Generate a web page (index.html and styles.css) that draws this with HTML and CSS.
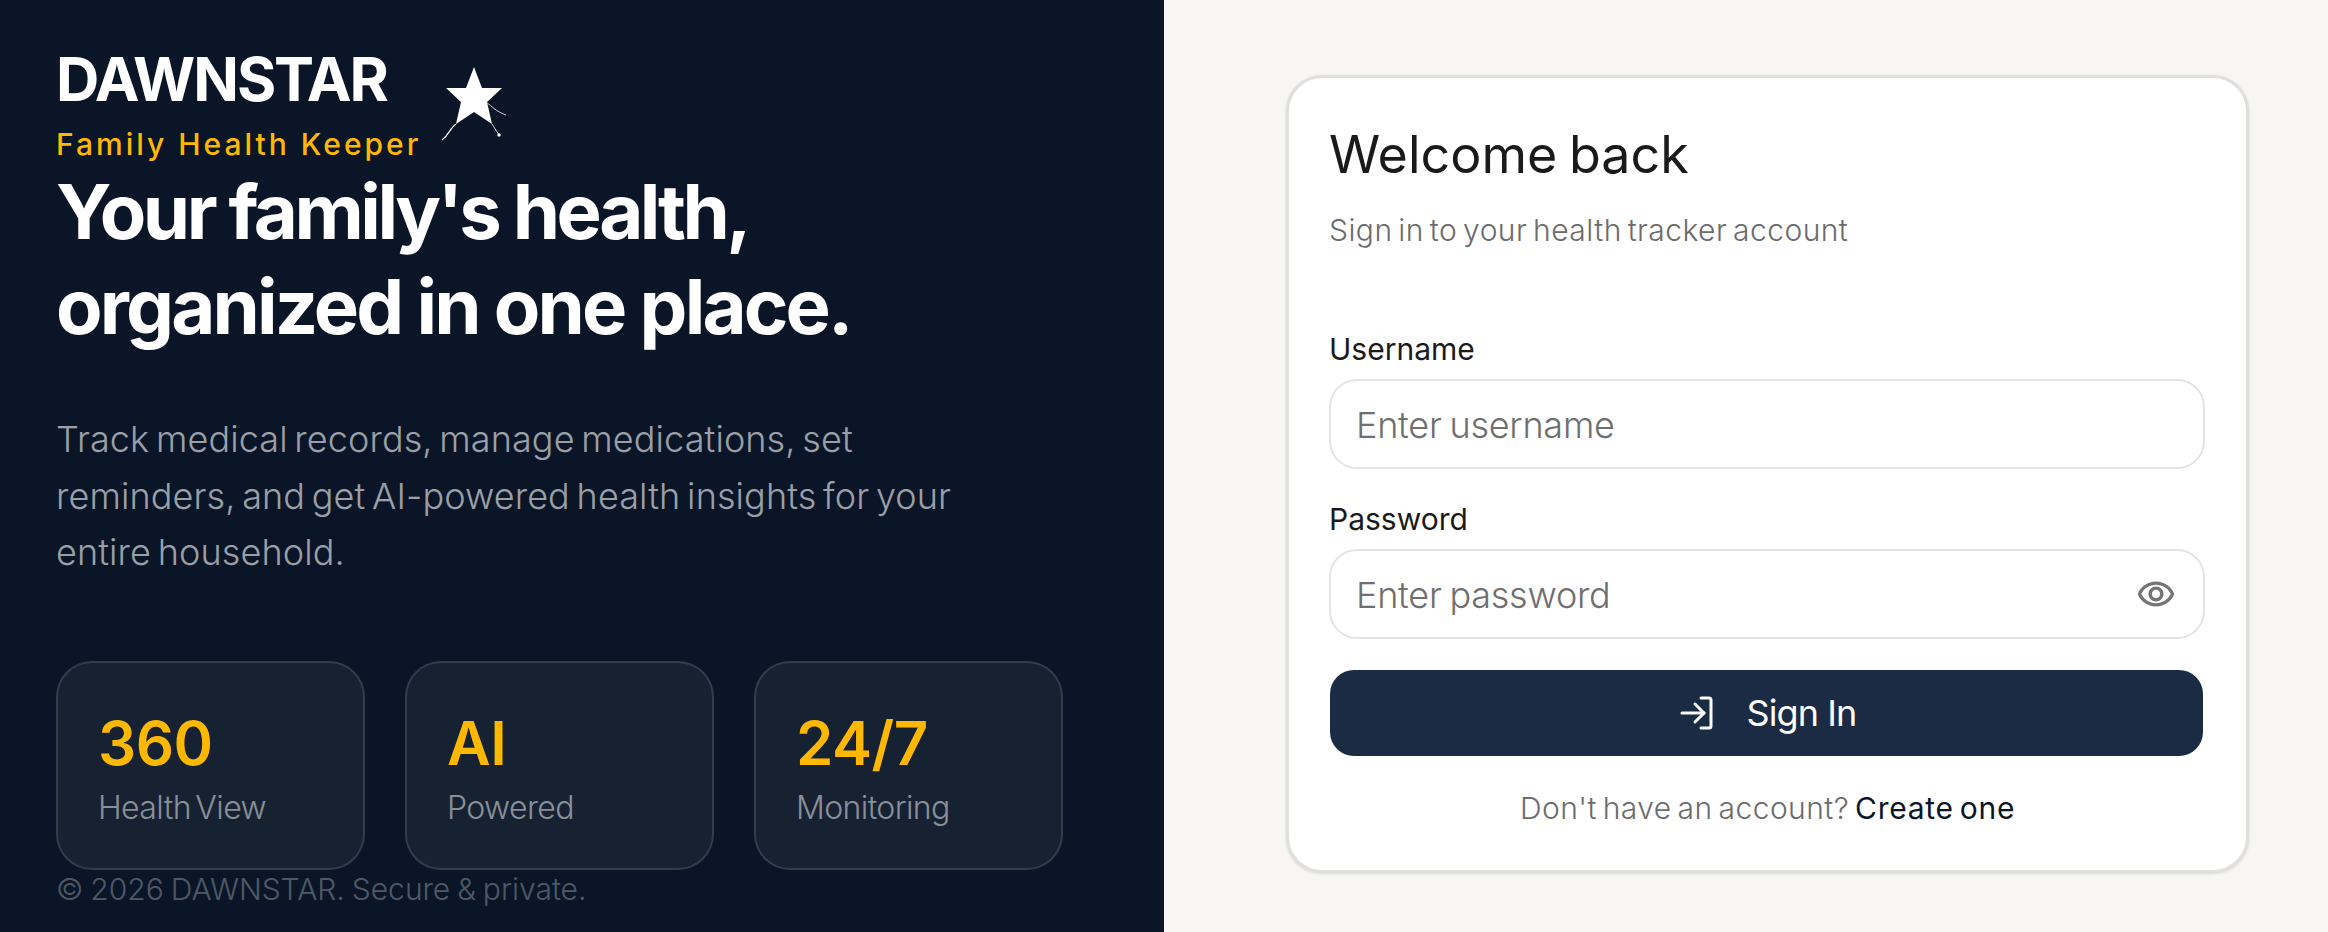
FILE: index.html
```html
<!DOCTYPE html>
<html lang="en">

<head>
    <meta charset="UTF-8">
    <meta name="viewport" content="width=device-width, initial-scale=1.0">
    <title>DAWNSTAR - Sign In</title>
    <link rel="stylesheet" href="styles.css">
</head>

<body>
    <div class="page">
        <div class="hero">
            <div class="brand">
                <div class="brand-text">
                    <div class="brand-name">DAWNSTAR</div>
                    <div class="brand-tag">Family Health Keeper</div>
                </div>
                <svg class="brand-star" viewBox="20 15 72 80" width="72" height="80">
                    <defs>
                        <filter id="soft" x="-20%" y="-20%" width="140%" height="140%">
                            <feGaussianBlur stdDeviation="0.6"></feGaussianBlur>
                        </filter>
                    </defs>
                    <polygon points="55,18 63,39 83,39 68,53 73,75 55,63 37,75 42,53 27,39 47,39" fill="#fff" filter="url(#soft)"></polygon>
                    <path d="M68 54 C73 57 76 62 87 66" fill="none" stroke="#fff" stroke-width="0.8"></path>
                    <path d="M73 75 L80 86" fill="none" stroke="#fff" stroke-width="0.8"></path>
                    <circle cx="80" cy="86" r="1.7" fill="#fff"></circle>
                    <path d="M37 75 C31 79 30 86 23 91" fill="none" stroke="#fff" stroke-width="1.3"></path>
                </svg>
            </div>
            <h1 class="headline">
                <span class="line-one">Your family's health,</span>
                <span class="line-two">organized in one place.</span>
            </h1>
            <p class="intro">Track medical records, manage medications, set reminders, and get AI-powered health insights for your entire household.</p>
            <div class="stats">
                <div class="stat">
                    <div class="stat-value">360</div>
                    <div class="stat-label">Health View</div>
                </div>
                <div class="stat">
                    <div class="stat-value">AI</div>
                    <div class="stat-label">Powered</div>
                </div>
                <div class="stat">
                    <div class="stat-value">24/7</div>
                    <div class="stat-label">Monitoring</div>
                </div>
            </div>
            <div class="copyright">© 2026 DAWNSTAR. Secure &amp; private.</div>
        </div>
        <div class="side">
            <div class="card">
                <h2 class="card-title">Welcome back</h2>
                <p class="card-sub">Sign in to your health tracker account</p>
                <label class="field-label" for="username">Username</label>
                <div class="input-box">
                    <input class="input" id="username" type="text" placeholder="Enter username">
                </div>
                <label class="field-label" for="password">Password</label>
                <div class="input-box">
                    <input class="input" id="password" type="password" placeholder="Enter password">
                    <svg class="eye" viewBox="0 0 24 24" width="40" height="40">
                        <path d="M12 6.5c3.79 0 7.17 2.13 8.82 5.5-1.65 3.37-5.02 5.5-8.82 5.5S4.83 15.37 3.18 12C4.83 8.63 8.21 6.5 12 6.5m0-2C7 4.5 2.73 7.61 1 12c1.73 4.39 6 7.5 11 7.5s9.27-3.11 11-7.5c-1.73-4.39-6-7.5-11-7.5zm0 5c1.38 0 2.5 1.12 2.5 2.5s-1.12 2.5-2.5 2.5-2.5-1.12-2.5-2.5 1.12-2.5 2.5-2.5m0-2c-2.48 0-4.5 2.02-4.5 4.5s2.02 4.5 4.5 4.5 4.5-2.02 4.5-4.5-2.02-4.5-4.5-4.5z" fill="#757575"></path>
                    </svg>
                </div>
                <button class="submit" type="button">
                    <svg viewBox="0 0 36 36" width="36" height="36" fill="none" stroke="#fff" stroke-width="3" stroke-linecap="round" stroke-linejoin="round">
                        <path d="M21 3h8a2 2 0 0 1 2 2v26a2 2 0 0 1-2 2h-8"></path>
                        <path d="M2 18h22"></path>
                        <path d="M15 9l9 9-9 9"></path>
                    </svg>
                    <span>Sign In</span>
                </button>
                <p class="signup">Don't have an account? <a class="signup-link" href="#">Create one</a></p>
            </div>
        </div>
    </div>
</body>

</html>
```

FILE: styles.css
```css
*{
    margin: 0;
    padding: 0;
    box-sizing: border-box;
}
body{
    font-family: "Inter", "Liberation Sans", sans-serif;
    background-color: #f7f6f4;
}
.page{
    display: flex;
    height: 932px;
    overflow: hidden;
}

/* left side */
.hero{
    width: 1164px;
    flex-shrink: 0;
    background-color: #0a1628;
    padding: 46px 56px 0;
    color: #fff;
}
.brand{
    display: flex;
    align-items: flex-start;
    gap: 18px;
}
.brand-name{
    font-size: 60px;
    line-height: 66px;
    font-weight: 700;
    letter-spacing: -2.1px;
}
.brand-tag{
    font-size: 30px;
    line-height: 38px;
    font-weight: 500;
    letter-spacing: 3px;
    color: #ffb800;
    margin-top: 13px;
}
.brand-star{
    margin-top: 18px;
}
.headline{
    font-size: 76px;
    line-height: 95px;
    font-weight: 700;
    margin-top: 1px;
}
.line-one{
    display: block;
    letter-spacing: -3.5px;
}
.line-two{
    display: block;
    letter-spacing: -2.85px;
}
.intro{
    font-size: 36px;
    line-height: 56.5px;
    font-weight: 300;
    letter-spacing: 0.1px;
    word-spacing: -3.5px;
    color: rgba(255, 255, 255, 0.6);
    width: 960px;
    margin-top: 57px;
}
.stats{
    display: flex;
    gap: 40.5px;
    margin-top: 80px;
}
.stat{
    width: 308.5px;
    height: 209px;
    padding: 46px 40px 0;
    background-color: rgba(255, 255, 255, 0.05);
    border: 2px solid rgba(255, 255, 255, 0.12);
    border-radius: 36px;
}
.stat-value{
    font-size: 60px;
    line-height: 68px;
    font-weight: 600;
    letter-spacing: -0.5px;
    color: #ffb800;
}
.stat-label{
    font-size: 32px;
    line-height: 40px;
    font-weight: 300;
    letter-spacing: -0.6px;
    word-spacing: -4px;
    color: rgba(255, 255, 255, 0.5);
    margin-top: 11px;
}
.copyright{
    font-size: 30px;
    line-height: 38px;
    font-weight: 300;
    word-spacing: -1.5px;
    color: rgba(255, 255, 255, 0.3);
}

/* right side */
.side{
    flex: 1;
    display: flex;
    justify-content: flex-start;
    align-items: flex-start;
    padding: 75px 0 0 122px;
}
.card{
    width: 963px;
    height: 798px;
    background-color: #fff;
    border: 3px solid #dfdfdd;
    border-radius: 36px;
    box-shadow: 0 1px 3px rgba(0, 0, 0, 0.12);
    padding: 47px 40px 0;
}
.card-title{
    font-size: 52px;
    line-height: 60px;
    font-weight: 400;
    word-spacing: -3px;
    color: #1a1a1a;
}
.card-sub{
    font-size: 30px;
    line-height: 38px;
    font-weight: 300;
    letter-spacing: 0.45px;
    word-spacing: -3px;
    color: #6b6b6b;
    margin-top: 26px;
    margin-bottom: 81px;
}
.field-label{
    display: block;
    font-size: 30px;
    line-height: 38px;
    font-weight: 400;
    color: #1a1a1a;
    margin-bottom: 11px;
}
.input-box{
    display: flex;
    align-items: center;
    width: 876px;
    height: 90px;
    border: 2px solid #e4e4e4;
    border-radius: 28px;
    padding: 0 25px;
    margin-bottom: 31px;
}
.input{
    flex: 1;
    min-width: 0;
    padding-top: 2px;
    border: none;
    outline: none;
    background: none;
    font-family: inherit;
    font-size: 36px;
    font-weight: 300;
    letter-spacing: -0.25px;
    word-spacing: -2px;
    color: #1a1a1a;
}
.input::placeholder{
    color: #6f6f6f;
    opacity: 1;
}
.eye{
    flex-shrink: 0;
    margin-right: 2px;
}
.submit{
    display: flex;
    align-items: center;
    justify-content: center;
    gap: 31px;
    width: 873px;
    height: 86px;
    margin: 24px 0 0 1px;
    padding-left: 3px;
    border: none;
    border-radius: 24px;
    background-color: #1b2b44;
    color: #fff;
    font-family: inherit;
    font-size: 36px;
    font-weight: 400;
    letter-spacing: -0.9px;
}
.signup{
    text-align: center;
    font-size: 30px;
    line-height: 38px;
    font-weight: 300;
    letter-spacing: 0.45px;
    word-spacing: -3px;
    color: #6b6b6b;
    margin-top: 33px;
}
.signup-link{
    color: #0a1628;
    font-weight: 400;
    letter-spacing: 0.7px;
    text-decoration: none;
}
```
